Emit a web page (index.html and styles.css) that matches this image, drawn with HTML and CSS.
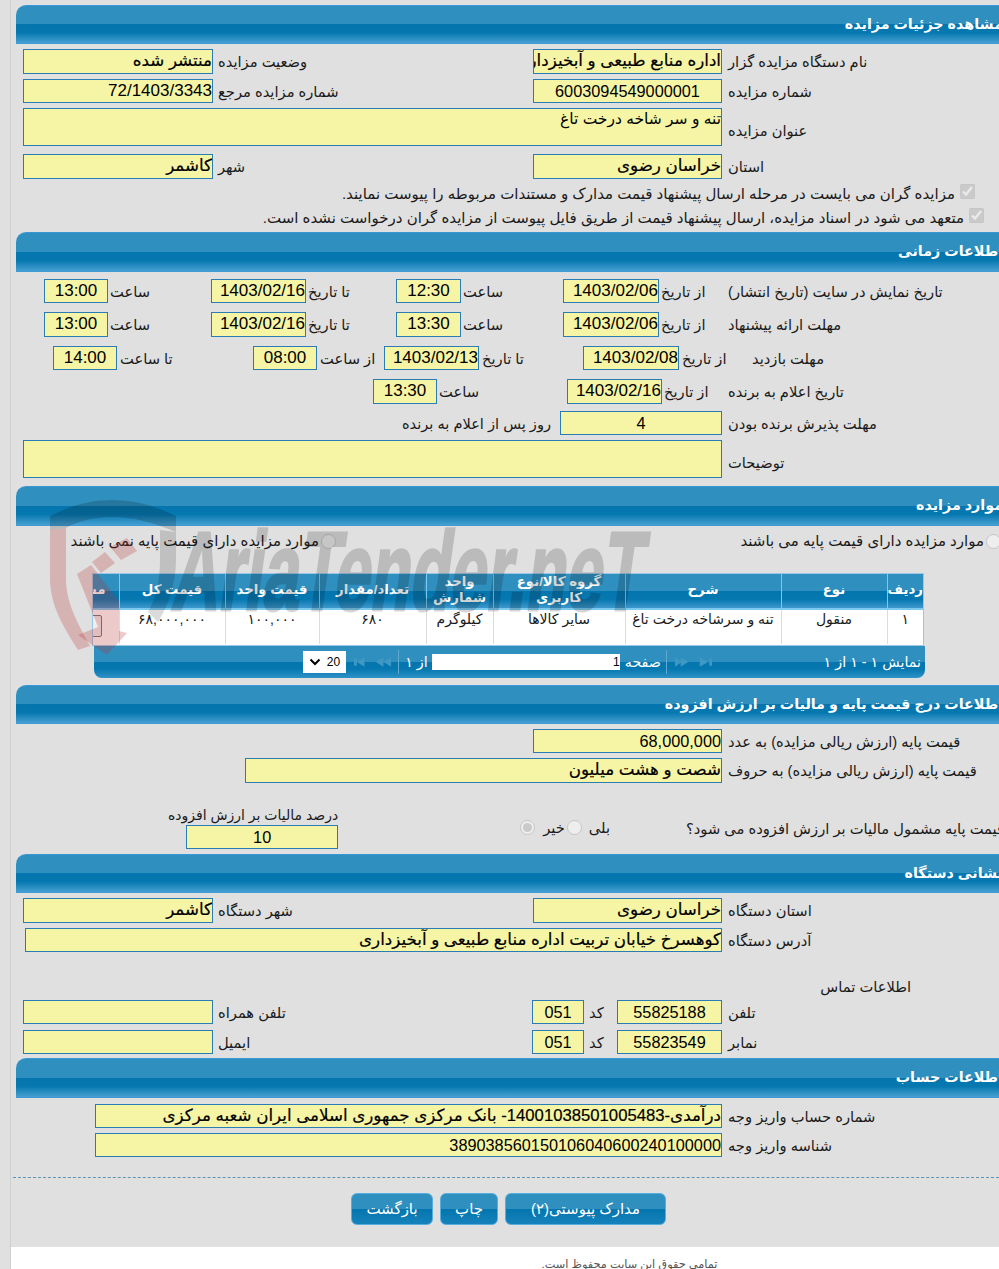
FILE: index.html
```html
<!DOCTYPE html>
<html lang="fa" dir="rtl">
<head>
<meta charset="utf-8">
<title>مشاهده جزئیات مزایده</title>
<link rel="stylesheet" href="styles.css">
</head>
<body>
<div class="page">
  <section class="sec">
    <h2 class="head">مشاهده جزئیات مزایده</h2>
    <div class="row mt5">
      <label class="lab">نام دستگاه مزایده گزار</label><div class="box w189 strong">اداره منابع طبیعی و آبخیزداری</div>
      <label class="lab2 w320">وضعیت مزایده</label><div class="box w190 strong">منتشر شده</div>
    </div>
    <div class="row mt5 h24">
      <label class="lab">شماره مزایده</label><div class="box w189 center">6003094549000001</div>
      <label class="lab2 w320">شماره مزایده مرجع</label><div class="box w190 date">72/1403/3343</div>
    </div>
    <div class="row mt5 h38">
      <label class="lab low">عنوان مزایده</label><div class="box area w699 small">تنه و سر شاخه درخت تاغ</div>
    </div>
    <div class="row mt8">
      <label class="lab">استان</label><div class="box w189 strong">خراسان رضوی</div>
      <label class="lab2 w320">شهر</label><div class="box w190 strong">کاشمر</div>
    </div>
    <div class="check c1"><input type="checkbox" checked disabled><span>مزایده گران می بایست در مرحله ارسال پیشنهاد قیمت مدارک و مستندات مربوطه را پیوست نمایند.</span></div>
    <div class="check c2"><input type="checkbox" checked disabled><span>متعهد می شود در اسناد مزایده، ارسال پیشنهاد قیمت از طریق فایل پیوست از مزایده گران درخواست نشده است.</span></div>
  </section>

  <section class="sec s2">
    <h2 class="head tall">اطلاعات زمانی</h2>
    <div class="row mt7 h24">
      <label class="lab t">تاریخ نمایش در سایت (تاریخ انتشار)</label>
      <label class="lab2 w69">از تاریخ</label><div class="box w96 date">1403/02/06</div>
      <label class="lab2 w102">ساعت</label><div class="box w65 center date">12:30</div>
      <label class="lab2 w90">تا تاریخ</label><div class="box w95 date">1403/02/16</div>
      <label class="lab2 w103">ساعت</label><div class="box w64 center date">13:00</div>
    </div>
    <div class="row mt9">
      <label class="lab t">مهلت ارائه پیشنهاد</label>
      <label class="lab2 w69">از تاریخ</label><div class="box w96 date">1403/02/06</div>
      <label class="lab2 w102">ساعت</label><div class="box w65 center date">13:30</div>
      <label class="lab2 w90">تا تاریخ</label><div class="box w95 date">1403/02/16</div>
      <label class="lab2 w103">ساعت</label><div class="box w64 center date">13:00</div>
    </div>
    <div class="row mt9 h24">
      <label class="lab t w247">مهلت بازدید</label>
      <label class="lab2 w73">از تاریخ</label><div class="box w96 date">1403/02/08</div>
      <label class="lab2 w104">تا تاریخ</label><div class="box w95 date">1403/02/13</div>
      <label class="lab2 w67">از ساعت</label><div class="box w64 center date">08:00</div>
      <label class="lab2 w136">تا ساعت</label><div class="box w64 center date">14:00</div>
    </div>
    <div class="row mt9">
      <label class="lab t">تاریخ اعلام به برنده</label>
      <label class="lab2 w66">از تاریخ</label><div class="box w95 date">1403/02/16</div>
      <label class="lab2 w130">ساعت</label><div class="box w64 center date">13:30</div>
    </div>
    <div class="row mt7 h24">
      <label class="lab">مهلت پذیرش برنده بودن</label><div class="box w162 center">4</div>
      <span class="after">روز پس از اعلام به برنده</span>
    </div>
    <div class="row mt5 h38">
      <label class="lab low">توضیحات</label><div class="box area w699"></div>
    </div>
  </section>

  <section class="sec s3">
    <h2 class="head tall">موارد مزایده</h2>
    <div class="radios">
      <label class="rad r1"><input type="radio" disabled name="base"><span>موارد مزایده دارای قیمت پایه می باشند</span></label>
      <label class="rad r2"><input type="radio" disabled name="base"><span>موارد مزایده دارای قیمت پایه نمی باشند</span></label>
    </div>
    <div class="grid">
      <table>
        <colgroup><col class="c36"><col class="c106"><col class="c156"><col class="c132"><col class="c67"><col class="c107"><col class="c94"><col class="c106"><col class="c27"></colgroup>
        <thead><tr><th>ردیف</th><th>نوع</th><th>شرح</th><th>گروه کالا/نوع کاربری</th><th>واحد شمارش</th><th>تعداد/مقدار</th><th>قیمت واحد</th><th>قیمت کل</th><th>مشاهده</th></tr></thead>
        <tbody><tr><td>۱</td><td>منقول</td><td>تنه و سرشاخه درخت تاغ</td><td>سایر کالاها</td><td>کیلوگرم</td><td>۶۸۰</td><td>۱۰۰,۰۰۰</td><td>۶۸,۰۰۰,۰۰۰</td><td class="act"><button class="mini" type="button">جزئیات</button></td></tr></tbody>
      </table>
    </div>
    <div class="pager">
      <span class="pinfo">نمایش ۱ - ۱ از ۱</span>
      <svg class="pico" width="38" height="12" viewBox="0 0 40 12" aria-hidden="true"><path d="M1 2v8h3V2zM5 6l9 5V1zM26 6l8 5V1zM33 6l7 5V1z" transform="matrix(-1 0 0 1 40 0)"/></svg>
      <span class="psep"></span>
      <span class="plab">صفحه</span>
      <span class="pinput">1</span>
      <span class="plab of">از ۱</span>
      <span class="psep s"></span>
      <svg class="pico left" width="38" height="12" viewBox="0 0 40 12" aria-hidden="true"><path d="M0 2v8h3V2zM3 6l8 5V1zM23 6l8 5V1zM31 6l8 5V1z"/></svg>
      <span class="psel"><span>20</span><svg width="12" height="8" viewBox="0 0 12 8" aria-hidden="true"><path d="M1.500 1.500 6 6l4.500-4.500" fill="none" stroke="#000" stroke-width="2"/></svg></span>
    </div>
  </section>

  <section class="sec s4">
    <h2 class="head">اطلاعات درج قیمت پایه و مالیات بر ارزش افزوده</h2>
    <div class="row mt5 h24">
      <label class="lab">قیمت پایه (ارزش ریالی مزایده) به عدد</label><div class="box w189">68,000,000</div>
    </div>
    <div class="row mt5">
      <label class="lab">قیمت پایه (ارزش ریالی مزایده) به حروف</label><div class="box w477 strong">شصت و هشت میلیون</div>
    </div>
    <div class="taxrow">
      <span class="question">آیا قیمت پایه مشمول مالیات بر ارزش افزوده می شود؟</span>
      <label class="yn yes"><span>بلی</span><input type="radio" disabled name="vat"></label>
      <label class="yn no"><span>خیر</span><input type="radio" checked disabled name="vat"></label>
      <div class="tax"><span class="taxlab">درصد مالیات بر ارزش افزوده</span><div class="box w152 center h23">10</div></div>
    </div>
  </section>

  <section class="sec s5">
    <h2 class="head">نشانی دستگاه</h2>
    <div class="row mt5">
      <label class="lab">استان دستگاه</label><div class="box w189 strong">خراسان رضوی</div>
      <label class="lab2 w320">شهر دستگاه</label><div class="box w190 strong">کاشمر</div>
    </div>
    <div class="row mt5 h24">
      <label class="lab">آدرس دستگاه</label><div class="box w697 strong">کوهسرخ خیابان تربیت اداره منابع طبیعی و آبخیزداری</div>
    </div>
    <div class="contact">اطلاعات تماس</div>
    <div class="row mt4 h24">
      <label class="lab">تلفن</label><div class="box w105 center">55825188</div>
      <label class="lab2 w33">کد</label><div class="box w52 center">051</div>
      <label class="lab2 w319">تلفن همراه</label><div class="box w190"></div>
    </div>
    <div class="row mt6 h24">
      <label class="lab">نمابر</label><div class="box w105 center">55823549</div>
      <label class="lab2 w33">کد</label><div class="box w52 center">051</div>
      <label class="lab2 w319">ایمیل</label><div class="box w190"></div>
    </div>
  </section>

  <section class="sec s6">
    <h2 class="head tall">اطلاعات حساب</h2>
    <div class="row mt6 h24">
      <label class="lab">شماره حساب واریز وجه</label><div class="box w627 strong">درآمدی-14001038501005483- بانک مرکزی جمهوری اسلامی ایران شعبه مرکزی</div>
    </div>
    <div class="row mt5 h24">
      <label class="lab">شناسه واریز وجه</label><div class="box w627">389038560150106040600240100000</div>
    </div>
  </section>

  <div class="actions">
    <button type="button" class="btn b1">مدارک پیوستی(۲)</button>
    <button type="button" class="btn b2">چاپ</button>
    <button type="button" class="btn b3">بازگشت</button>
  </div>

  <footer class="foot">تمامی حقوق این سایت محفوظ است.</footer>

  <svg class="mark" width="660" height="200" viewBox="0 0 660 200" aria-hidden="true">
    <path class="shield-top" d="M50 22C72 11 92 6 112 6c22 0 44 6 64 16v16C152 28 132 23 112 23 92 23 76 28 66 34l-16 2z"/>
    <path class="shield-red" d="M50 36l16-2v50c0 24 10 42 24 68l-12 4C60 128 50 108 50 84z"/>
    <path class="shield-dark" d="M160 36l16 2v28c0 24-8 46-18 62l-10-10c8-14 12-32 12-52z"/>
    <path class="shield-red" d="M77 80l14-9 28 36v30l8 2-20 22-29-20 10-4 10-4z"/>
    <path class="shield-red" d="M92 68l13-10 10 11-14 10zM110 53l17-9 10 13-16 9z"/>
    <text class="mark-text" x="0" y="0" transform="translate(170 116) skewX(-8)" textLength="470" lengthAdjust="spacingAndGlyphs">AriaTender.neT</text>
  </svg>
</div>
</body>
</html>
```
FILE: styles.css
```css
* { box-sizing: border-box; }
html, body { margin: 0; padding: 0; height: 1269px; overflow: hidden; background: #e0e0e0; }
body { font-family: "Liberation Sans", "DejaVu Sans", sans-serif; font-size: 15px; color: #1a1a1a; }
.page { position: relative; margin-left: 10px; width: 989px; height: 1269px; border-left: 1px solid #cfcfcf; overflow: hidden; direction: rtl; }
.sec { height: 232px; padding-top: 5px; }
.s2 { height: 254px; padding-top: 0; }
.s3 { height: 199px; padding-top: 0; }
.s4 { height: 169px; padding-top: 0; }
.s5 { height: 204px; padding-top: 0; }
.s6 { height: 116px; padding-top: 0; }
.head { margin: 0 0 0 5px; height: 39px; padding: 8px 0 0 0; border-top: 1px solid #3a97d6; border-bottom: 1px solid #3f9bd8; border-top-left-radius: 10px; color: #fff; font-size: 14.300px; font-weight: bold; line-height: 20px; white-space: nowrap; text-indent: -4px; background: linear-gradient(#2f8fbf 0, #2f8fbf 49%, #0475ae 50%, #0678b0 72%, #469fd0 100%); }
.tall { height: 40px; }
.row { display: flex; align-items: center; height: 25px; }
.h24 { height: 24px; }
.h38 { height: 38px; }
.h23 { height: 23px; }
.mt4 { margin-top: 4px; }
.mt5 { margin-top: 5px; }
.mt6 { margin-top: 6px; }
.mt7 { margin-top: 7px; }
.mt8 { margin-top: 8px; }
.mt9 { margin-top: 9px; }
.lab { flex: none; width: 277px; padding-left: 6px; font-size: 14.700px; text-align: left; white-space: nowrap; }
.low { padding-top: 6px; }
.lab2 { flex: none; padding-left: 2px; font-size: 14.700px; text-align: left; white-space: nowrap; }
.t { width: 271px; padding-left: 0; }
.w247 { width: 247px; }
.w320 { width: 320px; padding-left: 5px; }
.w319 { width: 319px; padding-left: 5px; }
.w69 { width: 69px; }
.w73 { width: 73px; padding-left: 3px; }
.w66 { width: 66px; }
.w33 { width: 33px; padding-left: 5px; }
.w102 { width: 102px; }
.w90 { width: 90px; }
.w103 { width: 103px; }
.w104 { width: 104px; padding-left: 3px; }
.w67 { width: 67px; padding-left: 3px; }
.w136 { width: 136px; padding-left: 3px; }
.w130 { width: 130px; }
.box { flex: none; height: 100%; border: 1px solid #2a7db4; background: #f6f5a5; color: #000; font-size: 16.300px; line-height: 22px; white-space: nowrap; overflow: hidden; text-align: right; }
.center { text-align: center; }
.date { font-size: 17px; }
.strong { font-size: 16.700px; font-weight: 400; -webkit-text-stroke: .2px #000; }
.small { font-size: 15.500px; line-height: 20px; }
.area { align-self: stretch; }
.w52 { width: 52px; }
.w64 { width: 64px; }
.w65 { width: 65px; }
.w95 { width: 95px; }
.w96 { width: 96px; }
.w105 { width: 105px; }
.w152 { width: 152px; }
.w162 { width: 162px; }
.w189 { width: 189px; }
.w190 { width: 190px; }
.w477 { width: 477px; }
.w627 { width: 627px; }
.w697 { width: 697px; }
.w699 { width: 699px; }
.after { margin-right: 9px; font-size: 14.600px; white-space: nowrap; }
.check { display: flex; align-items: center; height: 24px; white-space: nowrap; }
.check input { align-self: flex-start; flex: none; width: 15px; height: 15px; margin: 2px 0 0; }
.rad input, .yn input { flex: none; width: 15px; height: 15px; margin: 0; }
.check span { margin-right: 5px; }
.c1 { margin-top: 3px; padding-right: 24px; }
.c2 { padding-right: 15px; }
.radios { display: flex; align-items: center; height: 30px; margin-top: 0; }
.rad { display: flex; align-items: center; white-space: nowrap; }
.rad span { margin-right: 2px; }
.r1 { width: 665px; margin-right: -2px; }
.grid { margin: 17px 75px 0 0; width: 832px; height: 73px; border: 1px solid #9cc7e4; overflow: hidden; background: #fff; }
.grid table { table-layout: fixed; width: 831px; border-collapse: collapse; }
.c36 { width: 36px; }
.c106 { width: 106px; }
.c156 { width: 156px; }
.c132 { width: 132px; }
.c67 { width: 67px; }
.c107 { width: 107px; }
.c94 { width: 94px; }
.c27 { width: 27px; }
th { height: 35px; padding: 0 0 2px; border-left: 1px solid #7cc9f0; border-bottom: 2px solid #7cc9f0; color: #fff; font-size: 13.300px; font-weight: bold; line-height: 16px; background: linear-gradient(#2f8fbf 0, #2f8fbf 49%, #0475ae 50%, #0678b0 75%, #3d98cc 100%); }
th:last-child { padding-right: 13px; border-left: 0; text-align: right; white-space: nowrap; overflow: hidden; }
td { height: 35px; padding: 0 2px; border-left: 1px solid #dcdcdc; font-size: 14px; line-height: 18px; text-align: center; vertical-align: top; white-space: nowrap; overflow: hidden; }
td:last-child { border-left: 0; }
.act { padding: 5px 17px 0 0; text-align: right; }
.mini { width: 60px; height: 22px; padding: 0; border: 1px solid #777; border-radius: 2px; background: #efefef; font: 13px "Liberation Sans", "DejaVu Sans", sans-serif; color: #222; }
.pager { display: flex; align-items: center; margin: 0 74px 0 0; width: 831px; height: 32px; padding-right: 4px; border-bottom-right-radius: 8px; border-bottom-left-radius: 8px; color: #fff; font-size: 14.300px; white-space: nowrap; background: linear-gradient(#2f8fbf 0, #2f8fbf 49%, #0475ae 50%, #0678b0 72%, #2e92c6 100%); }
.pinfo { flex: none; width: 208px; }
.psep { flex: none; width: 1px; height: 24px; margin-right: 8px; background: #5fa9d0; }
.psep.s { margin-right: 6px; }
.pico { flex: none; margin-right: 0; fill: #3f97c4; }
.pico.left { margin-right: 6px; }
.plab { flex: none; margin-right: 5px; }
.plab.of { margin-right: 4px; }
.pinput { flex: none; width: 188px; height: 16px; margin-right: 5px; background: #fff; color: #000; font-size: 12px; line-height: 16px; text-align: right; }
.psel { display: flex; flex: none; align-items: center; justify-content: space-between; width: 43px; height: 22px; margin-right: 8px; padding: 0 6px; background: #fff; color: #000; font-size: 12px; }
.taxrow { display: flex; align-items: flex-end; height: 42px; margin-top: 24px; }
.question { flex: none; width: 343px; margin-right: -30px; padding-bottom: 11px; font-size: 14.700px; text-align: left; white-space: nowrap; line-height: 18px; }
.yn { display: flex; flex: none; align-items: center; height: 22px; margin-bottom: 11px; font-size: 14.700px; }
.yn span { margin-left: 7px; }
.yes { margin-right: 76px; }
.no { margin-right: 2px; }
.no span { margin-left: 8px; }
.tax { display: flex; flex: none; flex-direction: column; margin-right: 182px; }
.taxlab { margin-bottom: 2px; font-size: 14px; white-space: nowrap; line-height: 16px; }
.contact { width: 90px; height: 18px; margin: 26px 88px 0 0; font-size: 14.700px; line-height: 18px; white-space: nowrap; }
.actions { display: flex; align-items: flex-start; height: 70px; margin: 3px 0 0 2px; padding: 15px 333px 0 0; gap: 7px; border-top: 1px dashed #5d93b7; }
.btn { height: 32px; padding: 0; border: 1px solid #55aee0; border-radius: 6px; color: #fff; font: 15px "Liberation Sans", "DejaVu Sans", sans-serif; background: linear-gradient(#2f8fbf 0, #2f8fbf 49%, #0475ae 50%, #1682bb 100%); }
.b1 { width: 161px; }
.b2 { width: 58px; }
.b3 { width: 82px; }
.foot { height: 30px; padding-left: 249px; background: #fff; color: #555; font-size: 11.300px; line-height: 34px; text-align: center; white-space: nowrap; }
.mark { position: absolute; left: -11px; top: 494px; direction: ltr; pointer-events: none; overflow: visible; }
.shield-top { fill: #000; opacity: .17; }
.shield-red { fill: #b92b2b; opacity: .25; }
.shield-dark { fill: #000; opacity: .14; }
.mark-text { fill: #000; stroke: #000; stroke-width: 3px; opacity: .16; font-family: "Liberation Sans", sans-serif; font-size: 112px; font-weight: bold; }
```
